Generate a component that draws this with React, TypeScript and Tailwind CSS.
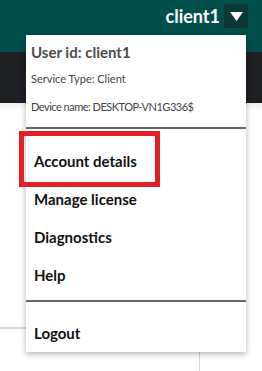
import React from 'react';

const font = { fontFamily: 'Lato, "Open Sans", sans-serif' };

const MenuItem = ({ label }: { label: string }) => (
  <div className="h-[38px] flex items-center pl-[8px] text-[15px] font-bold text-[#111]">{label}</div>
);

export default function App() {
  return (
    <div className="relative w-[262px] h-[371px] overflow-hidden bg-white" style={font}>
      {/* top bar */}
      <header className="h-[52px] bg-[#004f4d] flex items-start justify-end pr-[14px] pt-[4px]">
        <div className="flex items-center gap-[4px]">
          <span className="text-white font-bold text-[18px] leading-[24px]">client1</span>
          <button className="w-[24px] h-[24px] bg-[#0b3835] flex items-center justify-center">
            <svg width="13" height="9" viewBox="0 0 13 9">
              <path d="M0 0 H13 L6.5 9 Z" fill="#fff" />
            </svg>
          </button>
        </div>
      </header>
      <div className="h-[51px] bg-[#1f2024]" />
      <div className="h-[8px] bg-gradient-to-b from-[#ececec] to-white" />

      {/* page content behind menu */}
      <div className="mt-[216px] w-[200px] h-[60px] border-t-2 border-r border-[#d6d6d6]" />

      {/* dropdown menu */}
      <div className="absolute left-[26px] top-[35px] w-[220px] h-[317px] bg-white shadow-[0_2px_6px_rgba(0,0,0,0.3)]">
        <div className="pl-[5px] pt-[7px] h-[92px]">
          <div className="text-[15px] font-bold text-[#4d4d4d] leading-[21px]">User id: client1</div>
          <div className="mt-[8px] text-[11px] text-[#444] leading-[15px]">Service Type: Client</div>
          <div className="mt-[13px] text-[11px] text-[#444] leading-[15px] tracking-[-0.5px]">Device name: DESKTOP-VN1G336$</div>
        </div>
        <div className="h-[2px] bg-[#666]" />
        <div className="pt-[13px]">
          <MenuItem label="Account details" />
          <MenuItem label="Manage license" />
          <MenuItem label="Diagnostics" />
          <MenuItem label="Help" />
        </div>
        <div className="mt-[6px] h-[2px] bg-[#666]" />
        <div className="pt-[12px]">
          <MenuItem label="Logout" />
        </div>

        {/* highlight */}
        <div className="absolute left-[-7px] top-[96px] w-[141px] h-[56px] border-[5px] border-[#e31e26]" />
      </div>
    </div>
  );
}
